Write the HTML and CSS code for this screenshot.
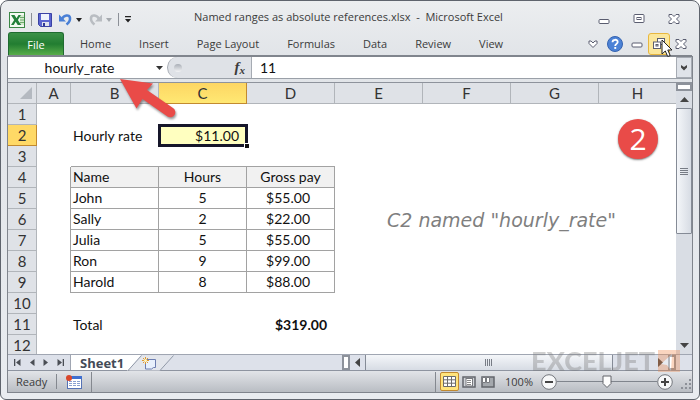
FILE: index.html
```html
<!DOCTYPE html>
<html lang="en">
<head>
    <meta charset="UTF-8">
    <meta name="viewport" content="width=device-width, initial-scale=1.0">
    <title>Named ranges as absolute references.xlsx - Microsoft Excel</title>
    <link rel="stylesheet" href="styles.css">
</head>
<body>
    <div class="window">
        <header class="title-bar">
            <div class="quick-access">
                <svg class="app-icon" width="16" height="16" viewBox="0 0 16 16">
                    <rect x="0.5" y="0.5" width="15" height="15" fill="#f4faf2" stroke="#3b8745"/>
                    <path d="M11 3h4v10h-4z" fill="#d5e8d0"/>
                    <path d="M11 5.500h4M11 8h4M11 10.500h4" stroke="#6fae6c"/>
                    <path d="M2 3h3.500l2 3.200L9.500 3H12L8.900 8l3.300 5H8.700L6.700 9.800 4.700 13H2l3.200-5z" fill="#23803a"/>
                </svg>
                <span class="divider"></span>
                <button class="qa-btn" aria-label="Save">
                    <svg width="14" height="14" viewBox="0 0 14 14">
                        <path d="M0.500 0.500h13v13h-11l-2-2z" fill="#5a64d0" stroke="#3a42a4"/>
                        <rect x="3" y="1" width="8" height="6" fill="#eef3fc"/>
                        <rect x="4" y="9" width="7" height="4" fill="#dfe2ee"/>
                        <rect x="5" y="10" width="2" height="3" fill="#2e3795"/>
                    </svg>
                </button>
                <button class="qa-btn undo" aria-label="Undo">
                    <svg width="13" height="13" viewBox="0 0 13 13">
                        <path d="M3 6C5 2 10.500 1 11 5c.3 2.700-1.500 5-3.500 6.500" fill="none" stroke="#4a80d6" stroke-width="2.600"/>
                        <path d="M0 1.500v7h7z" fill="#4a80d6"/>
                    </svg>
                    <svg width="6" height="4" viewBox="0 0 6 4"><path d="M0 0h6L3 4z" fill="#222"/></svg>
                </button>
                <button class="qa-btn redo" aria-label="Redo">
                    <svg width="13" height="13" viewBox="0 0 13 13">
                        <path d="M10 6C8 2 2.500 1 2 5c-.3 2.700 1.500 5 3.500 6.500" fill="none" stroke="#b9bdc2" stroke-width="2.600"/>
                        <path d="M13 1.500v7H6z" fill="#b9bdc2"/>
                    </svg>
                    <svg width="6" height="4" viewBox="0 0 6 4"><path d="M0 0h6L3 4z" fill="#a5a9ae"/></svg>
                </button>
                <span class="divider"></span>
                <button class="qa-btn more" aria-label="Customize toolbar">
                    <svg width="6" height="7" viewBox="0 0 6 7"><path d="M0 0h6v1.300H0zM0 3h6L3 6.500z" fill="#222"/></svg>
                </button>
            </div>
            <h1 class="title">Named ranges as absolute references.xlsx&nbsp; -&nbsp; Microsoft Excel</h1>
            <div class="window-buttons">
                <button aria-label="Minimize">
                    <svg width="12" height="12" viewBox="0 0 12 12"><rect x="1" y="6.500" width="10" height="4" rx="1" fill="#fff" stroke="#5a5d70"/></svg>
                </button>
                <button aria-label="Maximize">
                    <svg width="12" height="12" viewBox="0 0 12 12"><rect x="1" y="1.500" width="10" height="8" rx="1" fill="#fff" stroke="#5a5d70"/><rect x="4" y="4.500" width="4" height="2" fill="#fff" stroke="#5a5d70"/></svg>
                </button>
                <button aria-label="Close">
                    <svg width="12" height="12" viewBox="0 0 12 12"><path d="M1 1.500h3l2 2 2-2h3v2L8.500 6 11 8.500v2H8l-2-2-2 2H1v-2L3.500 6 1 3.500z" fill="#fff" stroke="#5a5d70"/></svg>
                </button>
            </div>
        </header>

        <nav class="ribbon">
            <button class="file-tab">File</button>
            <a href="#" class="tab">Home</a>
            <a href="#" class="tab">Insert</a>
            <a href="#" class="tab">Page Layout</a>
            <a href="#" class="tab">Formulas</a>
            <a href="#" class="tab">Data</a>
            <a href="#" class="tab">Review</a>
            <a href="#" class="tab">View</a>
            <div class="ribbon-buttons">
                <button aria-label="Expand ribbon">
                    <svg width="10" height="8" viewBox="0 0 10 8"><path d="M1 1h2l2 2 2-2h2v2.500l-4 4-4-4z" fill="#fff" stroke="#5a5d70"/></svg>
                </button>
                <button aria-label="Help">
                    <svg width="16" height="16" viewBox="0 0 16 16"><circle cx="8" cy="8" r="7.500" fill="#4c82d6" stroke="#3563b0"/><path d="M5.500 6.200C5.500 3 10.700 3 10.700 6c0 1.900-2.500 1.900-2.500 4" fill="none" stroke="#fff" stroke-width="1.800"/><rect x="7.300" y="11" width="1.900" height="1.900" fill="#fff"/></svg>
                </button>
                <button aria-label="Minimize workbook">
                    <svg width="12" height="12" viewBox="0 0 12 12"><rect x="1" y="5" width="10" height="4" rx="1" fill="#fff" stroke="#5a5d70"/></svg>
                </button>
                <button class="hot" aria-label="Restore workbook">
                    <svg width="12" height="12" viewBox="0 0 12 12"><rect x="4.500" y="0.500" width="7" height="6" fill="#fff" stroke="#5a5d70"/><rect x="0.500" y="4" width="7" height="6.500" fill="#fff" stroke="#5a5d70"/><rect x="3" y="6.500" width="2" height="1.500" fill="none" stroke="#5a5d70"/></svg>
                    <svg class="pointer" width="12" height="19" viewBox="0 0 12 19"><path d="M1 1v14l3.300-3 2.400 5.500 2.500-1L6.800 11H11z" fill="#fff" stroke="#222"/></svg>
                </button>
                <button aria-label="Close workbook">
                    <svg width="12" height="12" viewBox="0 0 12 12"><path d="M1 1.500h3l2 2 2-2h3v2L8.500 6 11 8.500v2H8l-2-2-2 2H1v-2L3.500 6 1 3.500z" fill="#fff" stroke="#5a5d70"/></svg>
                </button>
            </div>
        </nav>

        <div class="frame">
            <div class="formula-bar">
                <input class="name-box" type="text" value="hourly_rate" aria-label="Name box">
                <button class="name-arrow" aria-label="Show names">
                    <svg width="7" height="4" viewBox="0 0 7 4"><path d="M0 0h7L3.500 4z" fill="#333"/></svg>
                </button>
                <div class="fx-area">
                    <span class="knob"></span>
                    <button class="fx" aria-label="Insert function"><i>f</i><i class="sub">x</i></button>
                </div>
                <input class="formula" type="text" value="11" aria-label="Formula">
                <button class="expand" aria-label="Expand formula bar">
                    <svg width="8" height="6" viewBox="0 0 8 6"><path d="M1 0l3 2 3-2v2.500L4 5.500 1 2.500z" fill="#444"/></svg>
                </button>
            </div>

            <main class="workspace">
                <table class="sheet">
                    <colgroup>
                        <col class="col-num"><col class="col-a"><col class="col-std"><col class="col-std"><col class="col-std"><col class="col-std"><col class="col-std"><col class="col-std"><col>
                    </colgroup>
                    <thead>
                        <tr>
                            <th class="corner"><svg width="12" height="12" viewBox="0 0 12 12"><path d="M12 0v12H0z" fill="#b4b9c0"/></svg></th>
                            <th>A</th><th>B</th><th class="active">C</th><th>D</th><th>E</th><th>F</th><th>G</th><th class="last">H</th>
                        </tr>
                    </thead>
                    <tbody>
                        <tr><th>1</th><td></td><td></td><td></td><td></td><td></td><td></td><td></td><td></td></tr>
                        <tr><th class="active">2</th><td></td><td>Hourly rate</td><td class="selected">$11.00<span class="handle"></span></td><td></td><td></td><td></td><td></td><td></td></tr>
                        <tr><th>3</th><td></td><td class="b"></td><td class="b"></td><td class="b"></td><td></td><td></td><td></td><td></td></tr>
                        <tr class="head"><th>4</th><td class="edge"></td><td class="box">Name</td><td class="box mid">Hours</td><td class="box mid">Gross pay</td><td></td><td></td><td></td><td></td></tr>
                        <tr><th>5</th><td class="edge"></td><td class="box">John</td><td class="box mid">5</td><td class="box money">$55.00</td><td></td><td></td><td></td><td></td></tr>
                        <tr><th>6</th><td class="edge"></td><td class="box">Sally</td><td class="box mid">2</td><td class="box money">$22.00</td><td></td><td></td><td></td><td></td></tr>
                        <tr><th>7</th><td class="edge"></td><td class="box">Julia</td><td class="box mid">5</td><td class="box money">$55.00</td><td></td><td></td><td></td><td></td></tr>
                        <tr><th>8</th><td class="edge"></td><td class="box">Ron</td><td class="box mid">9</td><td class="box money">$99.00</td><td></td><td></td><td></td><td></td></tr>
                        <tr><th>9</th><td class="edge"></td><td class="box">Harold</td><td class="box mid">8</td><td class="box money">$88.00</td><td></td><td></td><td></td><td></td></tr>
                        <tr><th>10</th><td></td><td></td><td></td><td></td><td></td><td></td><td></td><td></td></tr>
                        <tr><th>11</th><td></td><td>Total</td><td></td><td class="total">$319.00</td><td></td><td></td><td></td><td></td></tr>
                        <tr class="cut"><th>12</th><td></td><td></td><td></td><td></td><td></td><td></td><td></td><td></td></tr>
                    </tbody>
                </table>
                <div class="v-scroll">
                    <span class="split"></span>
                    <button class="step" aria-label="Scroll up"><svg width="9" height="5" viewBox="0 0 9 5"><path d="M0 5h9L4.500 0z" fill="#444"/></svg></button>
                    <span class="v-thumb"><i></i></span>
                    <button class="step end" aria-label="Scroll down"><svg width="9" height="5" viewBox="0 0 9 5"><path d="M0 0h9L4.500 5z" fill="#444"/></svg></button>
                </div>

                <svg class="arrow" width="64" height="46" viewBox="0 0 64 46">
                    <path d="M3 3l33 4.500-6 6.500 26 18a5 5 0 0 1-5.500 8.500L25.500 23l-6 9.500z" fill="#e94b48"/>
                </svg>
                <div class="step-badge">2</div>
                <p class="note">C2 named "hourly_rate"</p>
            </main>

            <div class="sheet-bar">
                <div class="sheet-nav">
                    <button aria-label="First sheet"><svg width="7" height="7" viewBox="0 0 7 7"><path d="M0 0h1.300v7H0zM6.500 0v7L2 3.500z" fill="#4a4e55"/></svg></button>
                    <button aria-label="Previous sheet"><svg width="5" height="7" viewBox="0 0 5 7"><path d="M4.500 0v7L0 3.500z" fill="#4a4e55"/></svg></button>
                    <button aria-label="Next sheet"><svg width="5" height="7" viewBox="0 0 5 7"><path d="M0.500 0v7L5 3.500z" fill="#4a4e55"/></svg></button>
                    <button aria-label="Last sheet"><svg width="7" height="7" viewBox="0 0 7 7"><path d="M5.700 0H7v7H5.700zM0.500 0v7L5 3.500z" fill="#4a4e55"/></svg></button>
                </div>
                <a href="#" class="sheet-tab">Sheet1</a>
                <button class="new-sheet" aria-label="Insert worksheet">
                    <svg width="48" height="16" viewBox="0 0 48 16">
                        <path d="M0 0h14L1 15.500H0z" fill="#fff"/>
                        <path d="M14.500 0.500h32L33 15.500H2z" fill="#e3e6ec"/>
                        <path d="M1 15.500L14.500 0.500M46.500 0.500L33 15.500" stroke="#9299a8" fill="none"/>
                        <path d="M18.500 4.500h10v8h-2l-2 1.500h-6z" fill="#e8f0fc" stroke="#6c7db0"/>
                        <path d="M18.500 2v7M15 5.500h7M16 3l5 5M21 3l-5 5" stroke="#e09a2e"/>
                        <circle cx="18.500" cy="5.500" r="1.500" fill="#fff6c0"/>
                    </svg>
                </button>
                <div class="h-scroll">
                    <span class="h-split"></span>
                    <button aria-label="Scroll left"><svg width="5" height="9" viewBox="0 0 5 9"><path d="M5 0v9L0 4.500z" fill="#444"/></svg></button>
                    <div class="h-track"><span class="h-thumb"><i></i></span></div>
                    <button aria-label="Scroll right"><svg width="5" height="9" viewBox="0 0 5 9"><path d="M0 0v9l5-4.500z" fill="#444"/></svg></button>
                    <span class="h-split"></span>
                </div>
            </div>

            <footer class="status-bar">
                <span class="ready">Ready</span>
                <button class="macro" aria-label="Record macro">
                    <svg width="16" height="14" viewBox="0 0 16 14">
                        <rect x="1.500" y="1.500" width="14" height="12" fill="#fff" stroke="#5572b5"/>
                        <rect x="1" y="1" width="15" height="3" fill="#3f6fd0"/>
                        <path d="M3 6.500h11M3 8.500h11M3 10.500h11" stroke="#8aa0d0" stroke-dasharray="3 1"/>
                        <circle cx="3" cy="3" r="3" fill="#d9472b"/>
                    </svg>
                </button>
                <div class="views">
                    <button class="view on" aria-label="Normal view"><svg width="13" height="11" viewBox="0 0 13 11"><path d="M0.500 0.500h12v10H0.500zM0.500 3.800h12M0.500 7.200h12M4.500 0.500v10M8.500 0.500v10" fill="#fff" stroke="#6b6b6b"/></svg></button>
                    <button class="view" aria-label="Page layout view"><svg width="14" height="12" viewBox="0 0 14 12"><rect x="1" y="1" width="12" height="10" fill="#d0d3d7" stroke="#63666c" stroke-width="1.500"/><rect x="4" y="2.500" width="6.500" height="7.500" fill="#fff" stroke="#77797e"/><path d="M5 4.500h4M5 6.500h4M5 8.500h4" stroke="#888"/></svg></button>
                    <button class="view" aria-label="Page break view"><svg width="14" height="12" viewBox="0 0 14 12"><rect x="1" y="1" width="12" height="10" fill="#a4a8ad" stroke="#63666c" stroke-width="1.500"/><path d="M1.500 1.500h3v5h-3zM5.500 1.500h3v5h-3z" fill="#fff" stroke="#77797e"/></svg></button>
                </div>
                <span class="percent">100%</span>
                <div class="zoom">
                    <button aria-label="Zoom out"><svg width="16" height="16" viewBox="0 0 16 16"><circle cx="8" cy="8" r="7.300" fill="#f7f8f9" stroke="#74777d"/><path d="M4 8h8" stroke="#444" stroke-width="2"/></svg></button>
                    <div class="zoom-line"><svg width="10" height="14" viewBox="0 0 10 14"><path d="M1 1h8v7.500L5 12.500 1 8.500z" fill="#fdfdfd" stroke="#62656b"/></svg></div>
                    <button aria-label="Zoom in"><svg width="16" height="16" viewBox="0 0 16 16"><circle cx="8" cy="8" r="7.300" fill="#f7f8f9" stroke="#74777d"/><path d="M4 8h8M8 4v8" stroke="#444" stroke-width="2"/></svg></button>
                </div>
                <svg class="grip" width="11" height="11" viewBox="0 0 11 11"><path d="M8 0h2v2H8zM4 4h2v2H4zM8 4h2v2H8zM0 8h2v2H0zM4 8h2v2H4zM8 8h2v2H8z" fill="#8c9098"/></svg>
            </footer>
        </div>

        <div class="watermark">
            <span>EXCELJET</span>
            <svg width="22" height="22" viewBox="0 0 22 22"><rect width="22" height="22" fill="#f28a4b"/><path d="M3 14L14 4l-1 17-4-6z" fill="#fff"/></svg>
        </div>
    </div>
</body>
</html>
```
FILE: styles.css
```css
* {
    box-sizing: border-box;
}
body {
    margin: 0;
    font-family: "Open Sans", "Noto Sans", sans-serif;
    font-size: 11px;
    color: #3b3b3b;
    background: #fff;
}
button {
    display: flex;
    align-items: center;
    justify-content: center;
    padding: 0;
    border: none;
    background: none;
    font: inherit;
    color: inherit;
}
input {
    border: none;
    padding: 0;
    min-width: 0;
    font: inherit;
    color: #111;
    background: #fff;
}
a {
    color: inherit;
    text-decoration: none;
}
svg {
    display: block;
    flex: none;
}
.window {
    position: relative;
    border: 1px solid #5f646d;
    border-radius: 8px 8px 6px 6px;
    padding: 0 7px 6px;
    background: linear-gradient(#eceef0, #e1e4e8 56px, #e9ecf0);
}

/* title bar */
.title-bar {
    display: flex;
    align-items: center;
    height: 31px;
}
.quick-access {
    display: flex;
    align-items: center;
    gap: 6px;
    width: 186px;
    padding: 6px 0 0 1px;
}
.divider {
    width: 1px;
    height: 13px;
    background: #8c9097;
}
.qa-btn {
    gap: 4px;
}
.undo,
.redo {
    margin-left: 1px;
}
.title {
    flex: 1;
    margin: 0;
    font-size: 11px;
    font-weight: normal;
    white-space: nowrap;
}
.window-buttons {
    display: flex;
    gap: 23px;
    padding: 4px 12px 0 0;
}

/* ribbon */
.ribbon {
    display: flex;
    align-items: center;
    height: 24px;
    border-bottom: 1px solid #80858d;
}
.file-tab {
    width: 56px;
    height: 23px;
    margin-right: 2px;
    border: 1px solid #1f6b30;
    border-bottom: none;
    border-radius: 3px 3px 0 0;
    background: linear-gradient(#3b9147, #227d31 50%, #58ad4a);
    color: #fff;
}
.tab {
    padding: 0 14px;
    white-space: nowrap;
}
.ribbon-buttons {
    display: flex;
    align-items: center;
    margin-left: auto;
}
.ribbon-buttons button {
    position: relative;
    width: 22px;
    height: 22px;
}
.ribbon-buttons .hot {
    border: 1px solid #e8b73f;
    border-radius: 3px;
    background: #fbe79c;
}
.pointer {
    position: absolute;
    left: 12px;
    top: 5px;
    z-index: 2;
}
.frame {
    margin: 0 -1px;
    border: 1px solid #80858d;
}

/* formula bar */
.formula-bar {
    display: flex;
    height: 22px;
    border-bottom: 1px solid #9aa0a8;
    background: #fff;
    font: 14px Lato, sans-serif;
}
.name-box {
    width: 143px;
    text-align: center;
}
.name-arrow {
    width: 16px;
}
.fx-area {
    display: flex;
    align-items: center;
    justify-content: space-between;
    width: 85px;
    padding: 0 6px;
    border: 1px solid #a6abb3;
    border-width: 0 1px 0 1px;
    border-radius: 11px 0 0 11px;
    background: #dfe2e7;
}
.knob {
    width: 8px;
    height: 8px;
    border-radius: 50%;
    background: linear-gradient(#a9aeb6, #f3f4f6);
}
.fx {
    font: bold 15px "Liberation Serif", serif;
}
.sub {
    font-size: 11px;
    padding-top: 4px;
}
.formula {
    flex: 1;
    padding-left: 8px;
}
.expand {
    width: 16px;
    border: 1px solid #a6abb3;
    background: #dfe3e9;
}

/* worksheet */
.workspace {
    position: relative;
    display: flex;
    margin-top: 3px;
    border-top: 1px solid #8e939c;
    background: #fff;
}
.sheet {
    flex: 1;
    width: 100%;
    table-layout: fixed;
    border-collapse: separate;
    border-spacing: 0;
    font: 14px/20px Lato, sans-serif;
    color: #111;
}
.col-num {
    width: 29px;
}
.col-a {
    width: 34px;
}
.col-std {
    width: 88px;
}
.sheet th {
    height: 21px;
    padding: 0;
    border-right: 1px solid #b1b5ba;
    border-bottom: 1px solid #b1b5ba;
    background: #dfe2e7;
    font-size: 15px;
    font-weight: normal;
    color: #333;
}
.sheet th.active {
    border-color: #c28a30;
    background: linear-gradient(#fdd663, #ffe873);
}
.sheet tbody th.active {
    background: #ffd966;
}
.sheet th.last {
    border-right: none;
}
.sheet .corner svg {
    margin-left: 12px;
}
.sheet td {
    height: 21px;
    padding: 0 2px;
    white-space: nowrap;
}
.sheet td.b {
    border-bottom: 1px solid #a2a2a2;
}
.sheet td.edge {
    border-right: 1px solid #a2a2a2;
}
.sheet td.box {
    border-right: 1px solid #a2a2a2;
    border-bottom: 1px solid #a2a2a2;
}
.head .box {
    background: #f1f1f1;
}
.sheet td.mid {
    text-align: center;
}
.sheet td.money {
    padding-right: 24px;
    text-align: right;
}
.sheet td.total {
    padding-right: 8px;
    text-align: right;
    font-weight: bold;
}
.sheet td.selected {
    position: relative;
    padding-right: 8px;
    text-align: right;
    background: #ffffc0;
    outline: 3px solid #16162a;
    outline-offset: -2px;
}
.handle {
    position: absolute;
    right: -2px;
    bottom: -2px;
    width: 5px;
    height: 5px;
    border: 1px solid #fff;
    border-width: 1px 0 0 1px;
    background: #111;
}
.sheet .cut th,
.sheet .cut td {
    height: 19px;
    line-height: 18px;
    border-bottom: none;
}
.v-scroll {
    display: flex;
    flex-direction: column;
    width: 16px;
    background: #d9dde4;
}
.split {
    height: 8px;
    border: 2px solid #8d929b;
    background: #fff;
}
.step {
    height: 17px;
}
.step.end {
    margin-top: auto;
}
.v-thumb {
    display: flex;
    align-items: center;
    justify-content: center;
    height: 126px;
    border: 1px solid #858b96;
    border-radius: 1px;
    background: linear-gradient(90deg, #f4f6f9, #d7dce4);
}
.v-thumb i {
    width: 8px;
    height: 7px;
    background: repeating-linear-gradient(#777c85 0 1px, transparent 1px 2px);
}

/* annotations over the sheet */
.arrow {
    position: absolute;
    left: 109px;
    top: -7px;
    filter: drop-shadow(1px 2px 1px rgba(0, 0, 0, 0.4));
}
.step-badge {
    position: absolute;
    right: 34px;
    top: 36px;
    width: 40px;
    height: 40px;
    border-radius: 50%;
    background: #e94b48;
    box-shadow: 0 1px 2px rgba(0, 0, 0, 0.5);
    color: #fff;
    font: 30px/40px "Open Sans", sans-serif;
    text-align: center;
}
.note {
    position: absolute;
    left: 379px;
    top: 127px;
    margin: 0;
    font: italic 19px/20px "DejaVu Sans", sans-serif;
    color: #7f7f7f;
}

/* sheet tabs */
.sheet-bar {
    display: flex;
    height: 17px;
    border-top: 1px solid #a0a6b2;
    border-bottom: 1px solid #8e94a0;
    background: #dde1ea;
}
.sheet-nav {
    display: flex;
    align-items: center;
    justify-content: space-between;
    width: 63px;
    padding: 0 6px;
    border-right: 1px solid #a0a6b2;
}
.sheet-tab {
    padding: 0 3px 0 9px;
    background: #fff;
    font: bold 13px/16px "Open Sans", sans-serif;
    color: #444b57;
}
.h-scroll {
    display: flex;
    gap: 5px;
    width: 350px;
    margin-left: auto;
    padding-right: 16px;
}
.h-split {
    width: 8px;
    border: 2px solid #8d929b;
    background: #fff;
}
.h-track {
    flex: 1;
}
.h-thumb {
    display: flex;
    align-items: center;
    justify-content: center;
    width: 86%;
    height: 100%;
    border: 1px solid #858b96;
    border-width: 0 1px;
    background: linear-gradient(#f4f6f9, #d7dce4);
}
.h-thumb i {
    width: 7px;
    height: 7px;
    background: repeating-linear-gradient(90deg, #777c85 0 1px, transparent 1px 2px);
}

/* status bar */
.status-bar {
    display: flex;
    align-items: center;
    height: 21px;
    background: linear-gradient(#e2e4e8, #b9bdc3);
}
.ready {
    width: 49px;
    padding-left: 8px;
    border-right: 1px solid #84888f;
}
.macro {
    width: 35px;
    height: 20px;
    border-right: 1px solid #84888f;
}
.views {
    display: flex;
    align-items: center;
    height: 20px;
    margin-left: auto;
    padding-left: 4px;
    border-left: 1px solid #84888f;
}
.view {
    width: 19px;
    height: 19px;
}
.view.on {
    border: 1px solid #c28a30;
    border-radius: 2px;
    background: #ffe47c;
}
.percent {
    width: 44px;
    text-align: center;
}
.zoom {
    display: flex;
    align-items: center;
}
.zoom-line {
    display: flex;
    justify-content: center;
    width: 100px;
    background: linear-gradient(#80858d, #80858d) center / 100% 1px no-repeat;
}
.grip {
    margin: 6px 0 0 8px;
}
.watermark {
    position: absolute;
    right: 19px;
    bottom: 27px;
    display: flex;
    gap: 3px;
    opacity: 0.35;
    font: 900 27px/22px Lato, sans-serif;
    color: #777;
}
```
